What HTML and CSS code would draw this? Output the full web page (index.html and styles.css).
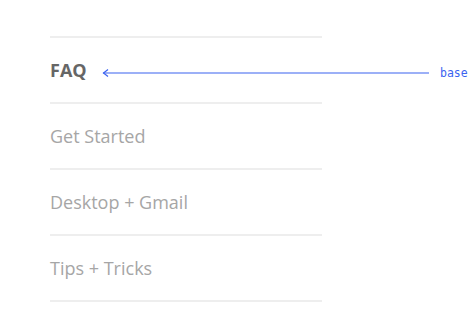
FILE: index.html
```html
<!DOCTYPE html>
<html>
<head>
<meta charset="utf-8">
<link rel="stylesheet" href="styles.css">
</head>
<body>
<div class="page">
  <ul class="menu">
    <li class="item active">FAQ</li>
    <li class="item">Get Started</li>
    <li class="item">Desktop + Gmail</li>
    <li class="item">Tips + Tricks</li>
  </ul>
  <div class="note">
    <svg class="arrow" width="327" height="10" viewBox="0 0 327 10">
      <path d="M1 5 H327" stroke="#3b63f0" stroke-width="1.2" fill="none"/>
      <path d="M6 1.5 L1.5 5 L6 8.5" stroke="#3b63f0" stroke-width="1.2" fill="none"/>
    </svg>
    <span class="label">base</span>
  </div>
</div>
</body>
</html>
```
FILE: styles.css
```css
html, body {
  margin: 0;
  padding: 0;
  background: #fff;
}
.page {
  position: relative;
  padding: 36px 0 0 50px;
}
.menu {
  list-style: none;
  margin: 0;
  padding: 0;
  width: 272px;
  border-top: 2px solid #eeeeee;
}
.item {
  height: 64px;
  border-bottom: 2px solid #eeeeee;
  display: flex;
  align-items: center;
  font-family: "Open Sans", "Noto Sans", sans-serif;
  font-size: 18px;
  color: #a6a6a6;
}
.item.active {
  font-weight: 700;
  color: #666666;
}
.note {
  position: absolute;
  left: 102px;
  top: 66px;
  display: flex;
  align-items: center;
  gap: 11px;
}
.arrow {
  display: block;
}
.label {
  font-family: "DejaVu Sans Mono", monospace;
  font-size: 11.5px;
  color: #3b63f0;
}
```
